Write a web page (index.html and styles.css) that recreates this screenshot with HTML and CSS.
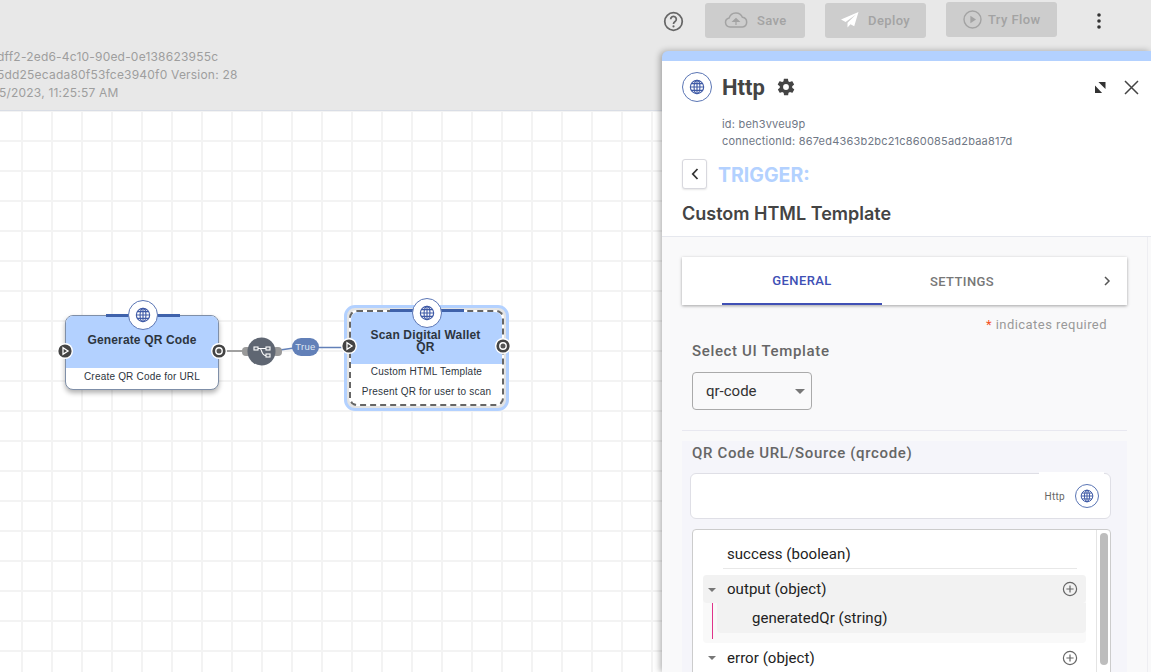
FILE: index.html
```html
<!DOCTYPE html>
<html lang="en">

<head>
    <meta charset="UTF-8">
    <meta name="viewport" content="width=device-width, initial-scale=1.0">
    <title>Flow editor</title>
    <link rel="stylesheet" href="styles.css">
</head>

<body>
    <svg class="defs">
        <defs>
            <symbol id="globe" viewBox="0 0 24 24">
                <g fill="none" stroke="currentColor" stroke-width="1.7">
                    <circle cx="12" cy="12" r="10"></circle>
                    <ellipse cx="12" cy="12" rx="4.4" ry="10"></ellipse>
                    <path d="M12 2v20M2 12h20M3.4 7h17.2M3.4 17h17.2"></path>
                </g>
            </symbol>
            <symbol id="plus" viewBox="0 0 16 16">
                <circle cx="8" cy="8" r="6.6" fill="none" stroke="#666" stroke-width="1.2"></circle>
                <path d="M8 4.4v7.2M4.4 8h7.2" stroke="#666" stroke-width="1.2"></path>
            </symbol>
            <symbol id="port-in" viewBox="0 0 16 16">
                <circle cx="8" cy="8" r="8" fill="#fff"></circle>
                <circle cx="8" cy="8" r="6.6" fill="#444"></circle>
                <path d="M6 4.800v6.400l5-3.200z" fill="#444" stroke="#fff" stroke-width="1.300"></path>
            </symbol>
            <symbol id="port-out" viewBox="0 0 16 16">
                <circle cx="8" cy="8" r="8" fill="#fff"></circle>
                <circle cx="8" cy="8" r="6.6" fill="#444"></circle>
                <circle cx="8" cy="8" r="3.200" fill="#555" stroke="#fff" stroke-width="1.400"></circle>
            </symbol>
        </defs>
    </svg>

    <header class="topbar">
        <div class="meta">
            <div class="meta-first">dff2-2ed6-4c10-90ed-0e138623955c</div>
            <div class="meta-second">5dd25ecada80f53fce3940f0 Version: 28</div>
            <div class="meta-last">5/2023, 11:25:57 AM</div>
        </div>
        <div class="actions">
            <svg class="help" viewBox="0 0 24 24">
                <circle cx="12" cy="12" r="10" fill="none" stroke="#666" stroke-width="2"></circle>
                <path d="M8.8 9.4a3.2 3.2 0 1 1 5 2.7c-1.2.8-1.8 1.4-1.8 2.7" fill="none" stroke="#666" stroke-width="2"></path>
                <circle cx="12" cy="17.6" r="1.2" fill="#666"></circle>
            </svg>
            <div class="btn btn-save">
                <svg width="24" height="16" viewBox="0 0 24 16">
                    <path d="M6 15a4.6 4.6 0 0 1-.8-9.100A7 7 0 0 1 18.400 5.300 4.900 4.900 0 0 1 18.500 15z" fill="none" stroke="#a3a3a3" stroke-width="1.500"></path>
                    <path d="M12 13V8M9 9.500l3-3 3 3z" fill="#a3a3a3" stroke="#a3a3a3" stroke-width="1.200"></path>
                </svg>
                Save
            </div>
            <div class="btn btn-deploy">
                <svg width="18" height="16" viewBox="0 0 18 16">
                    <path d="M17.500 0 0 7.500l4.600 2.400L15 2.500 6.500 10.800v4.700l3-3.300 3.700 2z" fill="#fff"></path>
                </svg>
                Deploy
            </div>
            <div class="btn btn-try">
                <svg width="19" height="19" viewBox="0 0 19 19">
                    <circle cx="9.500" cy="9.500" r="8.500" fill="none" stroke="#a3a3a3" stroke-width="1.400"></circle>
                    <path d="M7.400 5.800v7.400l5.600-3.700z" fill="#a3a3a3"></path>
                </svg>
                Try Flow
            </div>
            <svg class="kebab" width="4" height="16" viewBox="0 0 4 16">
                <circle cx="2" cy="2" r="1.800"></circle>
                <circle cx="2" cy="8" r="1.800"></circle>
                <circle cx="2" cy="14" r="1.800"></circle>
            </svg>
        </div>
    </header>

    <main class="canvas">
        <svg class="edges" width="660" height="562">
            <path d="M226 240h20" stroke="#a0a0a0" stroke-width="2"></path>
            <path d="M280 239l14-2" stroke="#6280b8" stroke-width="1.500"></path>
            <path d="M318 236.500h26" stroke="#6280b8" stroke-width="1.500"></path>
            <rect x="242" y="236" width="10" height="9" rx="4" fill="#9a9a9a"></rect>
            <rect x="272" y="236" width="10" height="9" rx="4" fill="#9a9a9a"></rect>
            <circle cx="261.500" cy="240.500" r="14" fill="#5f6672"></circle>
            <g fill="none" stroke="#fff" stroke-width="1.100">
                <rect x="254" y="236" width="4" height="3"></rect>
                <rect x="266" y="236" width="4" height="3"></rect>
                <rect x="266" y="243" width="4" height="3"></rect>
                <path d="M258 237.500h8M260 237.500c2 0 1 7 6 7"></path>
            </g>
        </svg>
        <div class="edge-label">True</div>

        <div class="node node-one">
            <div class="node-top"></div>
            <div class="node-globe"><svg width="16" height="16"><use href="#globe"></use></svg></div>
            <div class="node-title">Generate QR Code</div>
            <div class="node-body">Create QR Code for URL</div>
            <svg class="port port-in"><use href="#port-in"></use></svg>
            <svg class="port port-out"><use href="#port-out"></use></svg>
        </div>

        <div class="node-ring">
            <div class="node node-two">
                <div class="node-top"></div>
                <div class="node-globe"><svg width="16" height="16"><use href="#globe"></use></svg></div>
                <div class="node-title">Scan Digital Wallet QR</div>
                <div class="node-body">
                    <div>Custom HTML Template</div>
                    <div>Present QR for user to scan</div>
                </div>
                <svg class="port port-in"><use href="#port-in"></use></svg>
                <svg class="port port-out"><use href="#port-out"></use></svg>
            </div>
        </div>
    </main>

    <aside class="panel">
        <div class="panel-head">
            <div class="title-row">
                <div class="globe-ring"><svg width="16" height="16"><use href="#globe"></use></svg></div>
                <h1>Http</h1>
                <svg class="gear" width="20" height="20" viewBox="0 0 24 24">
                    <path fill="#444" fill-rule="evenodd" d="M19.400 13c.1-.3.100-.7.100-1s0-.7-.1-1l2.100-1.600c.2-.2.300-.4.100-.7l-2-3.500c-.1-.2-.4-.3-.6-.2l-2.500 1c-.5-.4-1.100-.7-1.700-1l-.4-2.600c0-.2-.2-.4-.5-.4h-4c-.3 0-.5.200-.5.400l-.4 2.600c-.6.300-1.200.6-1.700 1l-2.500-1c-.2-.1-.5 0-.6.200l-2 3.500c-.1.300-.1.500.1.700L4.600 11c-.1.300-.1.700-.1 1s0 .7.100 1l-2.100 1.600c-.2.200-.3.400-.1.700l2 3.500c.1.200.4.300.6.200l2.500-1c.5.400 1.100.7 1.700 1l.4 2.600c0 .2.200.4.500.4h4c.3 0 .5-.2.500-.4l.4-2.600c.6-.3 1.200-.6 1.700-1l2.500 1c.2.100.5 0 .6-.2l2-3.500c.1-.3.100-.5-.1-.7zM12 15.500a3.500 3.500 0 1 1 0-7 3.500 3.500 0 0 1 0 7z"></path>
                </svg>
                <svg class="expand" width="11" height="11" viewBox="0 0 11 11">
                    <path d="M3.400 0H10.500V7.100zM0 3.400 7.100 11H0z" fill="#333"></path>
                </svg>
                <svg class="close" width="15" height="15" viewBox="0 0 15 15">
                    <path d="M1 1l13 13M14 1 1 14" stroke="#444" stroke-width="1.500"></path>
                </svg>
            </div>
            <div class="ids">
                <div>id: beh3vveu9p</div>
                <div>connectionId: 867ed4363b2bc21c860085ad2baa817d</div>
            </div>
            <div class="trigger-row">
                <div class="back">
                    <svg width="8" height="12" viewBox="0 0 8 12">
                        <path d="M6.500 1 1.800 6l4.700 5" fill="none" stroke="#333" stroke-width="1.800"></path>
                    </svg>
                </div>
                <div class="trigger">TRIGGER:</div>
            </div>
            <h2>Custom HTML Template</h2>
        </div>

        <div class="panel-body">
            <div class="tabs">
                <div class="tab tab-active">GENERAL</div>
                <div class="tab">SETTINGS</div>
                <svg class="tab-next" width="8" height="10" viewBox="0 0 8 10">
                    <path d="M2 1l4 4-4 4" fill="none" stroke="#555" stroke-width="1.500"></path>
                </svg>
            </div>
            <div class="required"><span>*</span> indicates required</div>
            <div class="field-label">Select UI Template</div>
            <div class="select">qr-code<span class="caret"></span></div>
            <div class="divider"></div>

            <section class="source">
                <div class="field-label">QR Code URL/Source (qrcode)</div>
                <div class="source-input">
                    <span class="input-tag">Http</span>
                    <div class="globe-ring globe-small"><svg width="14" height="14"><use href="#globe"></use></svg></div>
                </div>
                <div class="tree">
                    <div class="tree-list">
                        <div class="tree-row tree-leaf">success (boolean)</div>
                        <div class="tree-group">
                            <div class="tree-row tree-open">
                                <span class="caret"></span>output (object)
                                <svg class="add" width="16" height="16"><use href="#plus"></use></svg>
                            </div>
                            <div class="tree-children">
                                <div class="tree-child">generatedQr (string)</div>
                            </div>
                        </div>
                        <div class="tree-row">
                            <span class="caret"></span>error (object)
                            <svg class="add" width="16" height="16"><use href="#plus"></use></svg>
                        </div>
                    </div>
                    <div class="tree-scroll"><div class="tree-thumb"></div></div>
                </div>
            </section>
        </div>
    </aside>
</body>

</html>
```

FILE: styles.css
```css
* {
    margin: 0;
    padding: 0;
    box-sizing: border-box;
}

html,
body {
    height: 100%;
    overflow: hidden;
}

body {
    font-family: Roboto, "Liberation Sans", sans-serif;
    background: #fff;
    position: relative;
}

.defs {
    display: none;
}

/* top bar */
.topbar {
    height: 111px;
    background: #e8e8e8;
    border-bottom: 1px solid #d9dde5;
    display: flex;
    justify-content: space-between;
}

.meta {
    padding-top: 48px;
    font: 12px/18px Inter, sans-serif;
    letter-spacing: 0.2px;
    color: #9e9e9e;
    white-space: nowrap;
}

.meta-first {
    margin-left: -3px;
}

.meta-second {
    margin-left: -3px;
}

.meta-last {
    margin-left: -1px;
}

.actions {
    width: 488px;
    display: flex;
    align-items: flex-start;
    padding-top: 3px;
}

.help {
    width: 21px;
    height: 21px;
    margin-top: 8px;
    margin-right: 21px;
}

.btn {
    height: 35px;
    border-radius: 3px;
    background: #cdcdcd;
    color: #a3a3a3;
    font-size: 13px;
    font-weight: 500;
    letter-spacing: 0.4px;
    display: flex;
    align-items: center;
    padding-bottom: 1px;
}

.btn-save {
    width: 100px;
    padding-left: 19px;
    gap: 9px;
}

.btn-deploy {
    width: 101px;
    margin-left: 20px;
    padding-left: 16px;
    gap: 9px;
}

.btn-try {
    width: 111px;
    margin-left: 20px;
    margin-top: -1px;
    padding-left: 17px;
    gap: 6px;
}

.kebab {
    fill: #333;
    margin-left: 40px;
    margin-top: 10px;
}

/* canvas */
.canvas {
    position: relative;
    height: 561px;
    background-color: #fff;
    background-image:
        linear-gradient(#f3f3f3 2px, transparent 2px),
        linear-gradient(90deg, #f3f3f3 2px, transparent 2px);
    background-size: 30px 30px;
    background-position: 21px 29px;
}

.edges {
    position: absolute;
    left: 0;
    top: 0;
}

.edge-label {
    position: absolute;
    left: 292px;
    top: 227px;
    width: 27px;
    height: 18px;
    border-radius: 9px;
    background: #6280b8;
    color: #dfe6f3;
    font: 9.5px/17px "Liberation Sans", sans-serif;
    letter-spacing: 0.3px;
    text-align: center;
}

.node {
    position: absolute;
    left: 65px;
    top: 204px;
    width: 154px;
    height: 75px;
    background: #fff;
    border: 1px solid #7f8fa8;
    border-radius: 8px;
    box-shadow: 0 3px 5px rgba(0, 0, 0, 0.3);
    color: #2d3540;
    font-family: "Liberation Sans", sans-serif;
    display: flex;
    flex-direction: column;
}

.node-top {
    position: absolute;
    left: 40px;
    right: 38px;
    top: -2px;
    height: 3px;
    background: #3f62ab;
}

.node-globe {
    position: absolute;
    left: 62px;
    top: -16px;
    width: 30px;
    height: 30px;
    border-radius: 50%;
    background: #fff;
    border: 1px solid #5b76b5;
    color: #3f5aa6;
    display: flex;
    align-items: center;
    justify-content: center;
}

.node-title {
    flex-shrink: 0;
    height: 52px;
    background: #b3d1ff;
    border-radius: 7px 7px 0 0;
    font-size: 12px;
    font-weight: bold;
    letter-spacing: 0.15px;
    line-height: 12px;
    text-align: center;
    padding: 18px 8px 0;
}

.node-body {
    font-size: 10px;
    letter-spacing: 0.2px;
    text-align: center;
    padding-top: 2px;
    line-height: 14px;
}

.port {
    position: absolute;
    top: 27px;
    width: 16px;
    height: 16px;
}

.port-in {
    left: -9px;
}

.port-out {
    right: -9px;
}

.node-ring {
    position: absolute;
    left: 344px;
    top: 194px;
    width: 165px;
    height: 106px;
    border: 3px solid #b3d1ff;
    border-radius: 11px;
    background: #e4e4e4;
}

.node-two {
    left: 2px;
    top: 2px;
    width: 155px;
    height: 96px;
    border: 2px dashed #666;
    box-shadow: none;
}

.node-two .node-title {
    height: 52px;
    padding-top: 17px;
    padding-left: 10px;
    padding-right: 12px;
}

.node-two .node-body {
    padding-top: 1px;
}

.node-two .node-body div {
    margin-bottom: 6px;
}

.node-two .node-top {
    left: 39px;
    top: -3px;
}

.node-two .node-globe {
    left: 61px;
    top: -14px;
}

.node-two .port {
    top: 26px;
    left: -10px;
}

.node-two .port-out {
    left: auto;
    right: -9px;
}

/* side panel */
.panel {
    position: absolute;
    left: 662px;
    top: 51px;
    right: 0;
    bottom: 0;
    background: #f9f9fa;
    border-top: 10px solid #b3d1ff;
    border-radius: 6px 0 0 0;
    box-shadow: -2px 0 6px rgba(0, 0, 0, 0.3);
    overflow: hidden;
}

.panel-head {
    height: 176px;
    background: #fff;
    border-bottom: 1px solid #e6e8ee;
    padding: 11px 12px 0 20px;
}

.title-row {
    display: flex;
    align-items: center;
    height: 30px;
}

.globe-ring {
    width: 30px;
    height: 30px;
    border-radius: 50%;
    border: 1px solid #5b76b5;
    color: #3f5aa6;
    display: flex;
    align-items: center;
    justify-content: center;
    background: #fff;
}

h1 {
    font-size: 22px;
    font-weight: 700;
    color: #444;
    margin-left: 10px;
}

.gear {
    margin-left: 11px;
}

.expand {
    margin-left: auto;
}

.close {
    margin-left: 18px;
}

.ids {
    margin-top: 14px;
    margin-left: 40px;
    font: 11px/17px Inter, sans-serif;
    letter-spacing: 0.2px;
    color: #6f7785;
}

.trigger-row {
    display: flex;
    align-items: center;
    margin-top: 9px;
}

.back {
    width: 25px;
    height: 30px;
    background: #fff;
    border: 1px solid #d8d8de;
    border-radius: 3px;
    box-shadow: 0 1px 2px rgba(0, 0, 0, 0.1);
    display: flex;
    align-items: center;
    justify-content: center;
}

.trigger {
    font: 700 19.500px Inter, sans-serif;
    color: #b3d1ff;
    margin-left: 11px;
    padding-top: 1px;
}

h2 {
    font: 600 18px/20px Inter, sans-serif;
    color: #444;
    margin-top: 15px;
}

.panel-body {
    height: 440px;
    padding: 20px 24px 0 20px;
    position: relative;
}

.panel-body::after {
    content: "";
    position: absolute;
    right: 3px;
    top: 0;
    bottom: 0;
    width: 1px;
    background: #eeeef2;
}

.tabs {
    height: 48px;
    background: #fff;
    box-shadow: 0 1px 3px rgba(0, 0, 0, 0.35);
    display: flex;
    padding-left: 40px;
    align-items: stretch;
    position: relative;
}

.tab {
    width: 160px;
    font-size: 13px;
    font-weight: 500;
    letter-spacing: 0.4px;
    color: #777;
    display: flex;
    align-items: center;
    justify-content: center;
}

.tab-active {
    color: #4050b5;
    border-bottom: 2px solid #4050b5;
}

.tab-next {
    position: absolute;
    right: 16px;
    top: 19px;
}

.required {
    margin-top: 12px;
    padding-right: 20px;
    text-align: right;
    font-size: 13px;
    line-height: 16px;
    letter-spacing: 0.45px;
    color: #999;
}

.required span {
    color: #f4511e;
}

.field-label {
    font-size: 15px;
    font-weight: 500;
    letter-spacing: 0.65px;
    line-height: 18px;
    color: #666;
    margin: 9px 0 0 10px;
}

.select {
    width: 120px;
    height: 38px;
    margin: 12px 0 0 10px;
    background: transparent;
    border: 1px solid #aaa;
    border-radius: 4px;
    font-size: 15px;
    line-height: 36px;
    padding-left: 13px;
    color: #333;
    display: flex;
    justify-content: space-between;
    align-items: center;
    padding-right: 6px;
}

.caret {
    width: 0;
    height: 0;
    border-left: 5px solid transparent;
    border-right: 5px solid transparent;
    border-top: 5px solid #777;
}

.divider {
    height: 1px;
    background: #e8e8f0;
    margin-top: 20px;
}

.source {
    margin-top: 10px;
    height: 240px;
    background: #f5f5fa;
    padding-top: 1px;
}

.source .field-label {
    margin-top: 2px;
}

.source-input {
    position: relative;
    margin: 11px 16px 0 8px;
    height: 46px;
    background: #fff;
    border: 1px solid #dfdfe6;
    border-radius: 6px;
    display: flex;
    align-items: center;
    justify-content: flex-end;
    padding-right: 11px;
    gap: 10px;
}

.source-input::before {
    content: "";
    position: absolute;
    right: 6px;
    top: -2px;
    width: 65px;
    height: 4px;
    background: #fff;
}

.input-tag {
    font-size: 10px;
    letter-spacing: 0.3px;
    color: #666;
}

.globe-small {
    width: 24px;
    height: 24px;
}

.tree {
    margin: 10px 16px 0 10px;
    height: 180px;
    background: #fff;
    border: 1px solid #ccc;
    border-radius: 4px;
    display: flex;
}

.tree-list {
    flex: 1;
    padding: 9px 10px 0 10px;
    font-size: 15px;
    letter-spacing: 0.05px;
    color: #222;
}

.tree-row {
    position: relative;
    height: 30px;
    display: flex;
    align-items: center;
    padding-left: 24px;
}

.tree-row .caret {
    position: absolute;
    left: 5px;
    top: 13px;
    border-left-width: 4px;
    border-right-width: 4px;
    border-top-width: 4px;
}

.tree-leaf {
    margin: 0 9px 6px 20px;
    padding-left: 4px;
    border-bottom: 1px solid #e8e8e8;
}

.tree-open {
    height: 28px;
    background: #f2f2f2;
    border-radius: 4px;
}

.add {
    margin-left: auto;
    margin-right: 8px;
}

.tree-group {
    background: #f9f9f9;
    border-radius: 4px;
    height: 68px;
}

.tree-children {
    margin-left: 9px;
    height: 36px;
    border-left: 1px solid #e0348a;
    padding-left: 4px;
}

.tree-child {
    height: 30px;
    background: #f2f2f2;
    border-radius: 0 0 4px 4px;
    padding-left: 35px;
    line-height: 30px;
}

.tree-scroll {
    width: 14px;
    border-left: 1px solid #e4e4e4;
    padding: 3px;
}

.tree-thumb {
    width: 8px;
    height: 132px;
    border-radius: 4px;
    background: #bdbdbd;
}
```
